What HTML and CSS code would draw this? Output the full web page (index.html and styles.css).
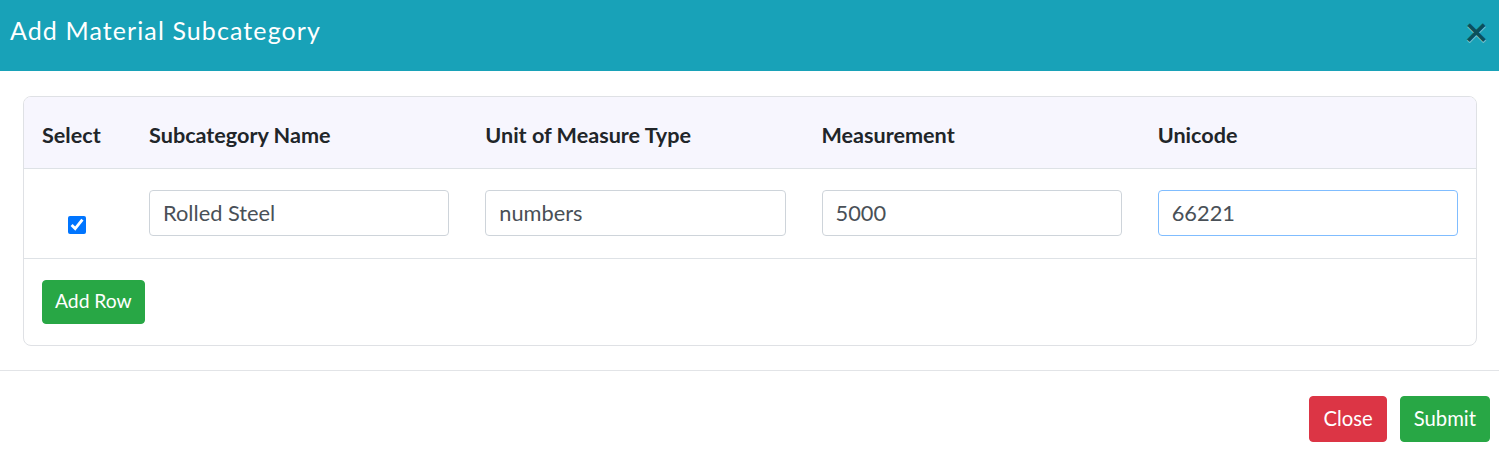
FILE: index.html
```html
<!DOCTYPE html>
<html lang="en">
<head>
<meta charset="utf-8">
<title>Add Material Subcategory</title>
<link rel="stylesheet" href="styles.css">
</head>
<body>
<div class="modal">
  <div class="modal-header">
    <h5 class="modal-title">Add Material Subcategory</h5>
    <button type="button" class="close" aria-label="Close">&times;</button>
  </div>
  <div class="modal-body">
    <div class="card">
      <table class="sub-table">
        <colgroup>
          <col class="col-select">
          <col class="col-field">
          <col class="col-field">
          <col class="col-field">
          <col class="col-field">
        </colgroup>
        <thead>
          <tr>
            <th>Select</th>
            <th>Subcategory Name</th>
            <th>Unit of Measure Type</th>
            <th>Measurement</th>
            <th>Unicode</th>
          </tr>
        </thead>
        <tbody>
          <tr>
            <td class="cell-check"><input type="checkbox" class="row-check" checked></td>
            <td><input type="text" class="form-control" value="Rolled Steel"></td>
            <td><input type="text" class="form-control" value="numbers"></td>
            <td><input type="text" class="form-control" value="5000"></td>
            <td><input type="text" class="form-control is-focused" value="66221"></td>
          </tr>
        </tbody>
      </table>
      <div class="card-actions">
        <button type="button" class="btn btn-success btn-sm">Add Row</button>
      </div>
    </div>
  </div>
  <div class="modal-footer">
    <button type="button" class="btn btn-danger">Close</button>
    <button type="button" class="btn btn-success">Submit</button>
  </div>
</div>
</body>
</html>
```
FILE: styles.css
```css
* {
  box-sizing: border-box;
}

html, body {
  margin: 0;
  padding: 0;
  background: #ffffff;
}

body {
  font-family: "Lato", "Noto Sans", sans-serif;
  color: #212529;
}

.modal {
  width: 1499px;
  background: #ffffff;
}

/* Teal title bar */
.modal-header {
  height: 71px;
  background: #18a2b8;
  display: flex;
  align-items: flex-start;
  justify-content: space-between;
  padding: 0 10px;
}

.modal-title {
  margin: 0;
  padding-top: 14px;
  font-size: 25px;
  font-weight: 400;
  letter-spacing: 1.1px;
  color: #ffffff;
  line-height: 32px;
}

.close {
  border: 0;
  background: transparent;
  padding: 0;
  margin-top: 11px;
  margin-right: 1px;
  font-family: "Lato", sans-serif;
  font-size: 40px;
  font-weight: 700;
  line-height: 1;
  color: #000000;
  opacity: 0.5;
  text-shadow: 0 1px 0 #ffffff;
  cursor: pointer;
}

.modal-body {
  padding: 25px 22px 24px 23px;
}

.card {
  border: 1px solid #dfe1e5;
  border-radius: 8px;
  overflow: hidden;
}

.sub-table {
  width: 100%;
  border-collapse: collapse;
  table-layout: fixed;
}

.col-select {
  width: 107px;
}

.col-field {
  width: 336px;
}

.sub-table th {
  background: #f7f6fe;
  text-align: left;
  font-size: 21.6px;
  font-weight: 700;
  color: #212529;
  height: 71px;
  padding: 6px 18px 0 18px;
  border-bottom: 1px solid #dee2e6;
  vertical-align: middle;
}

.sub-table td {
  padding: 21px 18px 22px 18px;
  border-bottom: 1px solid #dee2e6;
  vertical-align: top;
}

.sub-table td.cell-check {
  padding-left: 44px;
  padding-top: 47px;
}

.row-check {
  width: 18px;
  height: 18px;
  margin: 0;
  display: block;
  accent-color: #0075ff;
}

.form-control {
  display: block;
  width: 100%;
  height: 46px;
  padding: 0 13px;
  font-family: "Lato", sans-serif;
  font-size: 21.8px;
  color: #495057;
  background: #ffffff;
  border: 1px solid #ced4da;
  border-radius: 4px;
  outline: none;
}

.form-control.is-focused {
  border-color: #80bdff;
}

.card-actions {
  padding: 21px 18px 21px 18px;
}

.btn {
  display: inline-block;
  font-family: "Lato", sans-serif;
  font-weight: 400;
  color: #ffffff;
  border: 1px solid transparent;
  border-radius: 4px;
  cursor: pointer;
  line-height: 1.5;
}

.btn-sm {
  height: 44px;
  padding: 0 12px;
  font-size: 19.3px;
}

.btn-success {
  background: #28a745;
  border-color: #28a745;
}

.btn-danger {
  background: #dc3545;
  border-color: #dc3545;
}

.modal-footer {
  border-top: 1px solid #e2e4e7;
  display: flex;
  justify-content: flex-end;
  gap: 13px;
  padding: 25px 9px 0 10px;
}

.modal-footer .btn {
  height: 46px;
  padding: 0 13px;
  font-size: 20.3px;
}
```
